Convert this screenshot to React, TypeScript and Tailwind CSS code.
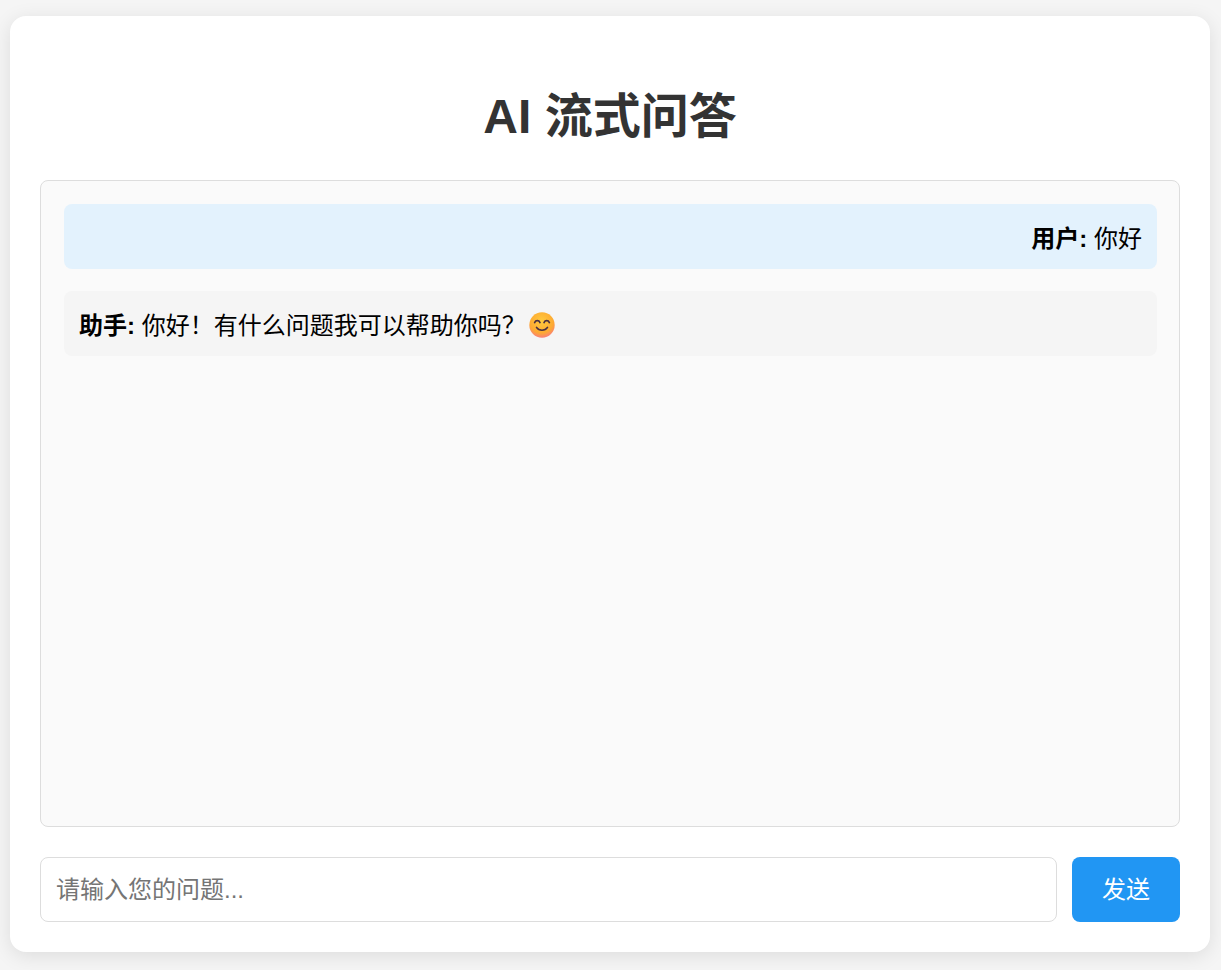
function SmileEmoji() {
  return (
    <svg className="-ml-[3px] inline-block h-[26px] w-[26px] align-[-4px]" viewBox="0 0 26 26">
      <defs>
        <radialGradient id="face" cx="48%" cy="34%" r="72%">
          <stop offset="0%" stopColor="#ffca3e" />
          <stop offset="65%" stopColor="#fdaa32" />
          <stop offset="100%" stopColor="#f9738c" />
        </radialGradient>
      </defs>
      <circle cx="13" cy="13" r="12.7" fill="url(#face)" />
      <path d="M5.6 10.6c1.1-2.6 4.3-2.6 5.4 0M15 10.6c1.1-2.6 4.3-2.6 5.4 0" fill="none" stroke="#4a3040" strokeWidth="1.6" strokeLinecap="round" />
      <path d="M7.5 15.4c2.5 3.8 8.5 3.8 11 0" fill="none" stroke="#4a3040" strokeWidth="1.6" strokeLinecap="round" />
    </svg>
  );
}

export default function App() {
  return (
    <div className="min-h-[970px] bg-[#f5f5f5] pt-4 pb-[18px] pl-2.5 font-['Liberation_Sans','Noto_Sans_CJK_SC',sans-serif]">
      <div className="flex h-[936px] w-[1200px] flex-col rounded-2xl bg-white p-[30px] shadow-[0_4px_20px_rgba(0,0,0,0.1)]">
        <h1 className="mt-[43px] mb-[36px] text-center text-5xl leading-[55px] font-bold text-[#333]">AI 流式问答</h1>
        <div className="mb-[30px] flex-1 rounded-lg border border-[#ddd] bg-[#fafafa] py-[23px] pr-[22px] pl-[23px]">
          <div className="mb-[22px] rounded-lg bg-[#e3f2fd] px-[15px] pt-[17px] pb-[13px] text-right text-2xl leading-[35px] text-black">
            <strong>用户:</strong> 你好
          </div>
          <div className="rounded-lg bg-[#f5f5f5] px-[15px] pt-[17px] pb-[13px] text-2xl leading-[35px] text-black">
            <strong>助手:</strong> 你好！有什么问题我可以帮助你吗？ <SmileEmoji />
          </div>
        </div>
        <div className="flex gap-[15px]">
          <input
            className="h-[65px] flex-1 rounded-lg border border-[#ddd] bg-white px-[15px] text-2xl outline-none placeholder:text-[#757575]"
            placeholder="请输入您的问题..."
          />
          <button className="h-[65px] w-[108px] rounded-lg bg-[#2196f3] text-2xl text-white">发送</button>
        </div>
      </div>
    </div>
  );
}
